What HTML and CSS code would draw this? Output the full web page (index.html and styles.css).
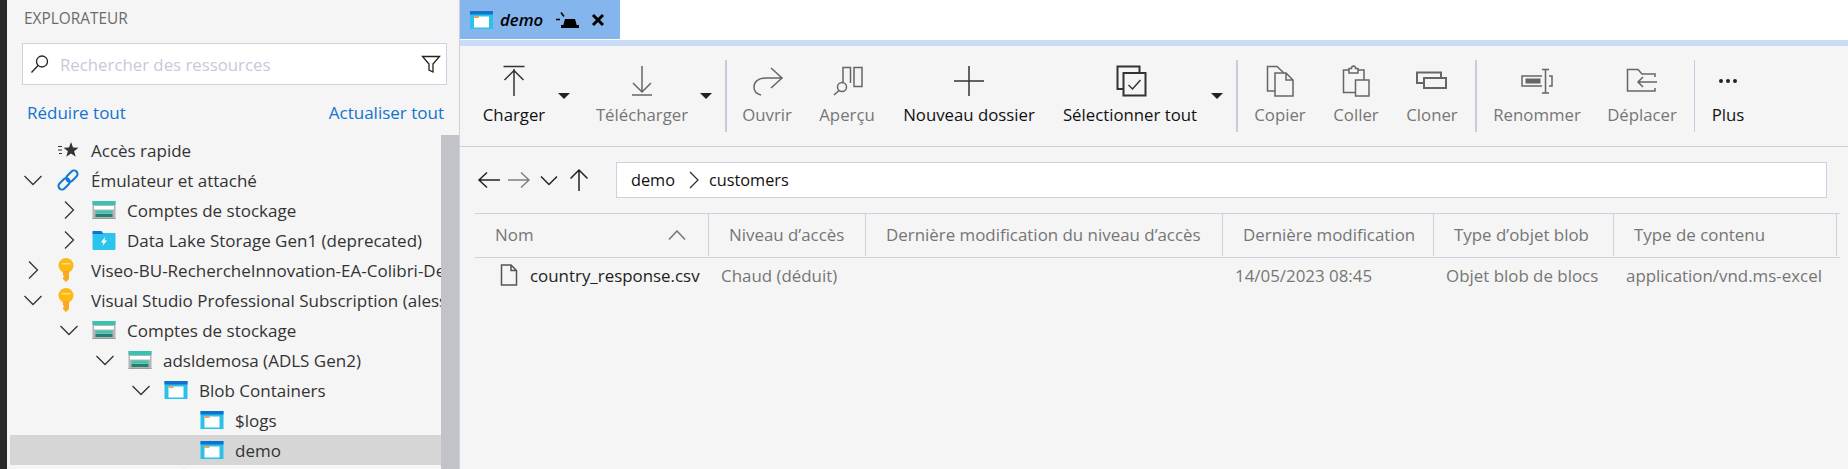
FILE: index.html
```html
<!DOCTYPE html>
<html lang="fr">
<head>
    <meta charset="UTF-8">
    <title>Explorateur</title>
    <link rel="stylesheet" href="styles.css">
</head>
<body>
    <svg class="defs" width="0" height="0">
        <symbol id="i-storage" viewBox="0 0 23 18">
            <rect width="23" height="18" fill="#b4b5b7"/>
            <rect width="23" height="4" fill="#37c2b1"/>
            <rect x="1.5" y="5" width="20" height="3.5" fill="#fff"/>
            <rect x="3" y="9.5" width="17" height="3" fill="#3fc4b4"/>
            <rect x="3" y="13" width="17" height="3" fill="#27806f"/>
            <rect y="17" width="23" height="1" fill="#9a9b9d"/>
        </symbol>
        <symbol id="i-container" viewBox="0 0 23 18">
            <rect width="23" height="18" fill="#2cc1ea"/>
            <rect width="23" height="3.5" fill="#0f72d2"/>
            <rect x="4" y="5.5" width="15" height="11" fill="#fff"/>
            <rect x="4" y="5" width="5" height="2" fill="#e9a35f"/>
        </symbol>
        <symbol id="i-key" viewBox="0 0 16 24">
            <circle cx="8" cy="7.500" r="7.500" fill="#fdb913"/>
            <path d="M5 13H11V21L8 24L5 21V19.500L6.500 18.500L5 17.500Z" fill="#f9a91c"/>
            <rect x="3.500" y="5" width="9" height="1.500" rx=".7" fill="#fde08a"/>
        </symbol>
    </svg>

    <div class="app">
        <div class="strip"></div>

        <aside class="sidebar">
            <div class="side-title">EXPLORATEUR</div>
            <div class="search">
                <svg class="search-ico" width="20" height="20" viewBox="0 0 20 20"><circle cx="12" cy="7.500" r="5.500"/><path d="M8 11.500L1.500 18.500"/></svg>
                <span class="search-text">Rechercher des ressources</span>
                <svg class="search-ico filter" width="20" height="20" viewBox="0 0 20 20"><path d="M1.500 2.500H18.500L12 10V18L8 16V10Z"/></svg>
            </div>
            <div class="side-links">
                <a href="#">Réduire tout</a>
                <a href="#">Actualiser tout</a>
            </div>
            <div class="tree-area">
                <div class="tree">
                    <div class="row lvl-0">
                        <span class="arrow"></span>
                        <svg class="ico" width="24" height="24" viewBox="0 0 24 24"><path d="M2 8.500H6M2 12H6M3 15.500H6" stroke="#333" stroke-width="1.200"/><path d="M15 4l2 5.500 5.500.2-4.400 3.500 1.600 5.600L15 15.600l-4.700 3.200 1.600-5.600-4.400-3.500 5.500-.2z" fill="#333"/></svg>
                        <span class="label">Accès rapide</span>
                    </div>
                    <div class="row lvl-0">
                        <svg class="arrow" width="24" height="24" viewBox="0 0 24 24"><path d="M3.500 8L12 16.500L20.500 8"/></svg>
                        <svg class="ico" width="24" height="24" viewBox="0 0 24 24"><g transform="rotate(-45 12 12)" fill="none" stroke="#0f78d4" stroke-width="2"><rect x="0" y="8.500" width="13" height="7" rx="3.500"/><rect x="11" y="8.500" width="13" height="7" rx="3.500"/></g></svg>
                        <span class="label">Émulateur et attaché</span>
                    </div>
                    <div class="row lvl-1">
                        <svg class="arrow" width="24" height="24" viewBox="0 0 24 24"><path d="M8 3.500L16.500 12L8 20.500"/></svg>
                        <svg class="ico" width="23" height="18"><use href="#i-storage"/></svg>
                        <span class="label">Comptes de stockage</span>
                    </div>
                    <div class="row lvl-1">
                        <svg class="arrow" width="24" height="24" viewBox="0 0 24 24"><path d="M8 3.500L16.500 12L8 20.500"/></svg>
                        <svg class="ico" width="23" height="19" viewBox="0 0 23 19"><rect y="2" width="23" height="17" rx="1" fill="#2cc4ec"/><path d="M0 0H9L11 3H0Z" fill="#0f72d2"/><path d="M12.500 6L8.500 11.500H11L10 15L14.500 9.500H12Z" fill="#fff"/></svg>
                        <span class="label">Data Lake Storage Gen1 (deprecated)</span>
                    </div>
                    <div class="row lvl-0">
                        <svg class="arrow" width="24" height="24" viewBox="0 0 24 24"><path d="M8 3.500L16.500 12L8 20.500"/></svg>
                        <svg class="ico key" width="16" height="24"><use href="#i-key"/></svg>
                        <span class="label">Viseo-BU-RechercheInnovation-EA-Colibri-Dev</span>
                    </div>
                    <div class="row lvl-0">
                        <svg class="arrow" width="24" height="24" viewBox="0 0 24 24"><path d="M3.500 8L12 16.500L20.500 8"/></svg>
                        <svg class="ico key" width="16" height="24"><use href="#i-key"/></svg>
                        <span class="label">Visual Studio Professional Subscription (alessandro)</span>
                    </div>
                    <div class="row lvl-1">
                        <svg class="arrow" width="24" height="24" viewBox="0 0 24 24"><path d="M3.500 8L12 16.500L20.500 8"/></svg>
                        <svg class="ico" width="23" height="18"><use href="#i-storage"/></svg>
                        <span class="label">Comptes de stockage</span>
                    </div>
                    <div class="row lvl-2">
                        <svg class="arrow" width="24" height="24" viewBox="0 0 24 24"><path d="M3.500 8L12 16.500L20.500 8"/></svg>
                        <svg class="ico" width="23" height="18"><use href="#i-storage"/></svg>
                        <span class="label">adsldemosa (ADLS Gen2)</span>
                    </div>
                    <div class="row lvl-3">
                        <svg class="arrow" width="24" height="24" viewBox="0 0 24 24"><path d="M3.500 8L12 16.500L20.500 8"/></svg>
                        <svg class="ico" width="23" height="18"><use href="#i-container"/></svg>
                        <span class="label">Blob Containers</span>
                    </div>
                    <div class="row lvl-4">
                        <span class="arrow"></span>
                        <svg class="ico" width="23" height="18"><use href="#i-container"/></svg>
                        <span class="label">$logs</span>
                    </div>
                    <div class="row lvl-4 selected">
                        <span class="arrow"></span>
                        <svg class="ico" width="23" height="18"><use href="#i-container"/></svg>
                        <span class="label">demo</span>
                    </div>
                    <div class="row lvl-3">
                        <span class="arrow"></span>
                        <svg class="ico" width="24" height="26" viewBox="0 0 24 26"><path d="M20 1.500L18 5H22Z" fill="#2cc1ea"/></svg>
                    </div>
                </div>
                <div class="scrollbar"></div>
            </div>
        </aside>

        <main class="main">
            <div class="tabs">
                <div class="tab">
                    <svg width="23" height="18"><use href="#i-container"/></svg>
                    <span class="tab-name">demo</span>
                    <svg width="23" height="16" viewBox="0 0 23 16"><path d="M7 14L9 7H19L21 14Z" fill="#000"/><rect x="5" y="13" width="18" height="3" fill="#000"/><path d="M0 7.500H4M5 .5L8 4.500" stroke="#000" stroke-width="1.500"/></svg>
                    <svg width="14" height="14" viewBox="0 0 14 14"><path d="M2 2L12 12M12 2L2 12" stroke="#000" stroke-width="3"/></svg>
                </div>
            </div>
            <div class="tab-bar"></div>

            <div class="toolbar">
                <div class="tool on t-charger">
                    <svg width="36" height="36" viewBox="0 0 36 36"><path d="M7.500 4.500H28.500M18 7V34M8.500 18L18 8.500L27.500 18"/></svg>
                    <span>Charger</span>
                </div>
                <div class="caret c-first"></div>
                <div class="tool t-telecharger">
                    <svg width="36" height="36" viewBox="0 0 36 36"><path d="M18 4V30M9 21L18 30L27 21M8 33H28"/></svg>
                    <span>Télécharger</span>
                </div>
                <div class="caret"></div>
                <div class="sep s-first"></div>
                <div class="tool t-ouvrir">
                    <svg width="36" height="36" viewBox="0 0 36 36"><path d="M22 6L33 16L22 26M33 16H17C9 16 5 20 5 25C5 29 8 32 12 33"/></svg>
                    <span>Ouvrir</span>
                </div>
                <div class="tool t-apercu">
                    <svg width="36" height="36" viewBox="0 0 36 36"><path d="M14 20V5.500H21.500V21M25 5.500H33V24.500H25ZM10 28.500L5 33"/><circle cx="13" cy="25" r="4.500"/></svg>
                    <span>Aperçu</span>
                </div>
                <div class="tool on t-nouveau">
                    <svg width="36" height="36" viewBox="0 0 36 36"><path d="M3 19H33M18 4V34"/></svg>
                    <span>Nouveau dossier</span>
                </div>
                <div class="tool on t-selection">
                    <svg width="36" height="36" viewBox="0 0 36 36"><path class="thick" d="M11 27H5.500V4.500H27.500V11M11.500 11H33.500V33.500H11.500Z"/><path d="M16.500 23L20.500 27L28.500 18"/></svg>
                    <span>Sélectionner tout</span>
                </div>
                <div class="caret c-select"></div>
                <div class="sep s-second"></div>
                <div class="tool t-copier">
                    <svg width="36" height="36" viewBox="0 0 36 36"><path d="M13 11H24L31 18V34H13ZM24 11V18H31M13 29H5.500V4.500H15L22 11"/></svg>
                    <span>Copier</span>
                </div>
                <div class="tool t-coller">
                    <svg width="36" height="36" viewBox="0 0 36 36"><path d="M17.500 30.500H5.500V8H11M20 8H26V18M17.500 18H31V34H17.500ZM11 11V6.500H13.500C13.500 3 17.500 3 17.500 6.500H20V11Z"/></svg>
                    <span>Coller</span>
                </div>
                <div class="tool t-cloner">
                    <svg width="36" height="36" viewBox="0 0 36 36"><path class="thick" d="M10 21H3V10.500H27V16M10 16H32V26H10Z"/></svg>
                    <span>Cloner</span>
                </div>
                <div class="sep s-third"></div>
                <div class="tool t-renommer">
                    <svg width="36" height="36" viewBox="0 0 36 36"><path d="M23 14H3V24H23M23 7.500H30M23 31H30M26.500 7.500V31M30 14H33V24H30"/><rect x="6.500" y="16.500" width="15" height="5" fill="#666" stroke="none"/></svg>
                    <span>Renommer</span>
                </div>
                <div class="tool t-deplacer">
                    <svg width="36" height="36" viewBox="0 0 36 36"><path d="M31 15V12H18L14 7.500H3.500V29H31V26M33 20H14M19 15L14 20L19 25"/></svg>
                    <span>Déplacer</span>
                </div>
                <div class="sep thin s-fourth"></div>
                <div class="tool on t-plus">
                    <svg width="36" height="36" viewBox="0 0 36 36"><circle class="dot" cx="11" cy="19" r="2"/><circle class="dot" cx="18" cy="19" r="2"/><circle class="dot" cx="25" cy="19" r="2"/></svg>
                    <span>Plus</span>
                </div>
            </div>

            <div class="nav">
                <svg width="30" height="30" viewBox="0 0 30 30"><path d="M26 15H5M13 7.500L5 15L13 22.500"/></svg>
                <svg class="off" width="30" height="30" viewBox="0 0 30 30"><path d="M4 15H25M17 7.500L25 15L17 22.500"/></svg>
                <svg width="30" height="30" viewBox="0 0 30 30"><path d="M7 11.500L15 19.500L23 11.500"/></svg>
                <svg width="30" height="30" viewBox="0 0 30 30"><path d="M15 26V5M6.500 13.500L15 5L23.500 13.500"/></svg>
                <div class="path">
                    <span>demo</span>
                    <svg width="10" height="18" viewBox="0 0 10 18"><path d="M1 1L9 9L1 17"/></svg>
                    <span>customers</span>
                </div>
            </div>

            <div class="grid head">
                <div class="th th-name">Nom
                    <svg width="18" height="10" viewBox="0 0 18 10"><path d="M1 9.500L9 1L17 9.500"/></svg>
                </div>
                <div class="th">Niveau d’accès</div>
                <div class="th">Dernière modification du niveau d’accès</div>
                <div class="th">Dernière modification</div>
                <div class="th">Type d’objet blob</div>
                <div class="th">Type de contenu</div>
                <div></div>
            </div>
            <div class="grid file">
                <div class="td td-name">
                    <svg width="18" height="22" viewBox="0 0 18 22"><path d="M1.500 1H11L16.500 6.500V21H1.500ZM11 1V6.500H16.500"/></svg>
                    <span>country_response.csv</span>
                </div>
                <div class="td">Chaud (déduit)</div>
                <div class="td"></div>
                <div class="td">14/05/2023 08:45</div>
                <div class="td">Objet blob de blocs</div>
                <div class="td">application/vnd.ms-excel</div>
                <div></div>
            </div>
        </main>
    </div>
</body>
</html>
```
FILE: styles.css
```css
html, body {
    margin: 0;
    height: 469px;
    overflow: hidden;
}
body {
    font-family: "Open Sans", "Noto Sans", sans-serif;
    font-size: 16.800px;
    background-color: #f5f5f5;
    color: #333;
}
.defs {
    display: block;
    height: 0;
}
.app {
    display: flex;
    height: 469px;
}
.strip {
    width: 7px;
    background: #2a2a2a;
}

/* panneau gauche */
.sidebar {
    width: 452px;
    border-right: 1px solid #cfcfe0;
    display: flex;
    flex-direction: column;
}
.side-title {
    height: 36px;
    line-height: 38px;
    padding-left: 17px;
    font-size: 15.400px;
    color: #6b6b6b;
}
.search {
    display: flex;
    align-items: center;
    height: 41px;
    width: 423px;
    margin: 7px 0 0 15px;
    background: #fff;
    border: 1px solid #cfd0e4;
}
.search-ico {
    flex: none;
    margin-left: 7px;
    fill: none;
    stroke: #222;
    stroke-width: 1.3;
}
.search-ico.filter {
    margin-right: 5px;
}
.search-text {
    flex: 1;
    margin-left: 10px;
    color: #c8c8da;
}
.side-links {
    display: flex;
    justify-content: space-between;
    height: 50px;
    line-height: 56px;
    padding: 0 15px 0 20px;
    font-size: 17px;
}
.side-links a {
    color: #1272cf;
    text-decoration: none;
}
.tree-area {
    display: flex;
    height: 334px;
}
.tree {
    flex: 1;
    min-width: 0;
    margin-left: 3px;
    overflow: hidden;
    font-size: 17px;
}
.scrollbar {
    width: 18px;
    background: #c2c3c9;
}
.row {
    display: flex;
    align-items: center;
    height: 30px;
    white-space: nowrap;
}
.row.selected {
    background: #d6d6d6;
}
.lvl-0 { padding-left: 11px; }
.lvl-1 { padding-left: 47px; }
.lvl-2 { padding-left: 83px; }
.lvl-3 { padding-left: 119px; }
.lvl-4 { padding-left: 155px; }
.arrow {
    flex: none;
    width: 24px;
    height: 24px;
    margin-right: 11px;
    fill: none;
    stroke: #333;
    stroke-width: 1.300;
}
.row .ico {
    flex: none;
    width: 24px;
    margin: 0 11px 0 0;
}
.row .ico.key {
    width: 20px;
    margin-right: 15px;
}
.label {
    flex: none;
}

/* onglets */
.main {
    flex: 1;
    min-width: 0;
}
.tabs {
    height: 40px;
    background: #fff;
}
.tab {
    display: flex;
    align-items: center;
    width: 150px;
    height: 39px;
    padding-left: 10px;
    background: #85b5ed;
    border-right: 1px solid #fff;
}
.tab-name {
    width: 56px;
    margin-left: 7px;
    font-style: italic;
    font-weight: 600;
    color: #000;
}
.tab svg:last-child {
    margin-left: 12px;
}
.tab-bar {
    height: 6px;
    background: #c8dcf5;
}

/* barre d'outils */
.toolbar {
    display: flex;
    height: 86px;
    padding: 14px 0 0 14px;
    border-bottom: 1px solid #cfcfe0;
}
.tool {
    flex: none;
    display: flex;
    flex-direction: column;
    align-items: center;
    margin-top: 2px;
    color: #767676;
    white-space: nowrap;
}
.tool svg {
    fill: none;
    stroke: #666;
    stroke-width: 1.500;
}
.tool span {
    margin-top: 7px;
    line-height: 20px;
}
.tool.on {
    color: #111;
}
.tool.on svg {
    stroke: #333;
}
.tool .thick {
    stroke-width: 2;
}
.tool .dot {
    fill: #222;
    stroke: none;
}
.t-charger { width: 80px; }
.t-telecharger { width: 116px; margin-left: 4px; }
.t-ouvrir { width: 60px; margin-left: 10px; }
.t-apercu { width: 60px; margin-left: 20px; }
.t-nouveau { width: 140px; margin-left: 22px; }
.t-selection { width: 140px; margin-left: 21px; }
.t-copier { width: 60px; margin-left: 12px; }
.t-coller { width: 60px; margin-left: 16px; }
.t-cloner { width: 60px; margin-left: 16px; }
.t-renommer { width: 100px; margin-left: 10px; }
.t-deplacer { width: 80px; margin-left: 15px; }
.t-plus { width: 60px; margin-left: 3px; }
.caret {
    flex: none;
    width: 0;
    height: 0;
    margin-top: 33px;
    border-left: 6px solid transparent;
    border-right: 6px solid transparent;
    border-top: 6px solid #222;
}
.c-first { margin-left: 4px; margin-right: 10px; }
.c-select { margin-left: 11px; }
.sep {
    flex: none;
    width: 2px;
    height: 72px;
    margin-left: 13px;
    background: #c9cadb;
}
.sep.thin {
    width: 1px;
    margin-left: 12px;
}

/* chemin */
.nav {
    display: flex;
    align-items: center;
    height: 36px;
    padding: 15px 0 0 14px;
}
.nav > svg {
    flex: none;
    fill: none;
    stroke: #222;
    stroke-width: 1.500;
}
.nav > svg.off {
    stroke: #808080;
}
.path {
    display: flex;
    align-items: center;
    width: 1195px;
    height: 34px;
    margin-left: 22px;
    padding-left: 14px;
    background: #fff;
    border: 1px solid #cfd0e4;
    color: #111;
    font-size: 16.300px;
}
.path svg {
    margin: 0 10px 0 14px;
    fill: none;
    stroke: #333;
    stroke-width: 1.300;
}

/* liste */
.grid {
    display: grid;
    grid-template-columns: 234px 157px 357px 211px 180px 223px 3px;
    margin-left: 15px;
    width: 1365px;
    font-size: 16.900px;
}
.head {
    height: 43px;
    margin-top: 15px;
    border-top: 1px solid #cfcfe0;
    border-bottom: 1px solid #cfcfe0;
}
.th {
    padding-left: 20px;
    line-height: 42px;
    height: 42px;
    border-right: 1px solid #cfcfe0;
    color: #767676;
    white-space: nowrap;
}
.th-name {
    display: flex;
    align-items: center;
    justify-content: space-between;
    padding-right: 22px;
}
.th-name svg {
    fill: none;
    stroke: #777;
    stroke-width: 1.500;
}
.file {
    height: 34px;
    align-items: center;
}
.td {
    padding-left: 12px;
    color: #767676;
    white-space: nowrap;
}
.td-name {
    display: flex;
    align-items: center;
    gap: 12px;
    padding-left: 25px;
    color: #222;
}
.td-name svg {
    fill: none;
    stroke: #555;
    stroke-width: 1.500;
}
```
